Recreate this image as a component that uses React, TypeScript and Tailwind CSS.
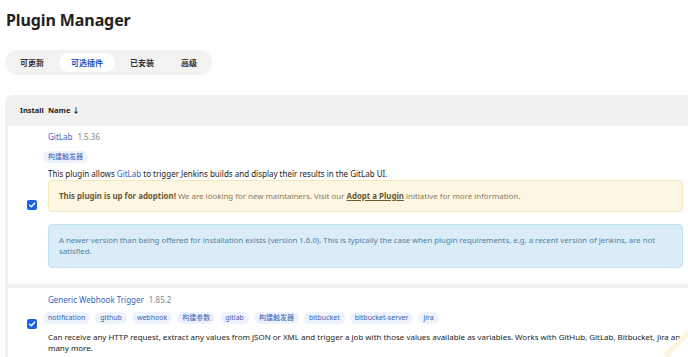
import React from "react";

const FONT = '"Noto Sans", "Noto Sans CJK SC", sans-serif';

function Check() {
  return (
    <span className="flex h-[10px] w-[10px] items-center justify-center rounded-[2px] bg-[#1b63e4]">
      <svg width="8" height="8" viewBox="0 0 10 10">
        <path d="M2 5.2 L4.2 7.3 L8.2 2.8" fill="none" stroke="white" strokeWidth="1.8" strokeLinecap="round" strokeLinejoin="round" />
      </svg>
    </span>
  );
}

function Badge({ children }: { children: React.ReactNode }) {
  return (
    <span className="flex h-[12px] items-center rounded-full bg-[#edf2fc] px-[5px] text-[7px] leading-[12px] text-[#3760b5]">
      {children}
    </span>
  );
}

export default function App() {
  const tags = ["notification", "github", "webhook", "构建参数", "gitlab", "构建触发器", "bitbucket", "bitbucket-server", "jira"];
  return (
    <div className="relative h-[357px] w-[688px] overflow-hidden bg-white text-[#333]" style={{ fontFamily: FONT }}>
      <h1 className="mt-[8px] pl-[6px] text-[16px] font-bold leading-[24px] tracking-[-0.1px] text-[#222]">Plugin Manager</h1>

      <div className="ml-[5px] mt-[18px] flex h-[25px] w-fit items-center gap-[3px] rounded-full bg-[#f2f2f2] px-[3px] text-[8px] font-semibold">
        <span className="flex h-[19px] items-center px-[12px]">可更新</span>
        <span className="flex h-[19px] items-center rounded-full bg-white px-[12px] text-[#2456c4]">可选插件</span>
        <span className="flex h-[19px] items-center px-[12px]">已安装</span>
        <span className="flex h-[19px] items-center px-[12px]">高级</span>
      </div>

      <div className="ml-[5px] mt-[20px] rounded-tl-[8px] bg-[#f1f1f1] pl-[3px]">
        <div className="flex h-[31px] items-center text-[7.5px] font-bold text-[#222]">
          <span className="w-[40px] shrink-0 pl-[12px]">Install</span>
          <span>Name ↓</span>
        </div>

        <div className="flex bg-white">
          <div className="flex w-[40px] shrink-0 items-center pl-[19px]">
            <Check />
          </div>
          <div className="flex min-w-0 flex-1 flex-col pb-[16px] pr-[5px] pt-[5px]">
            <div className="flex items-center gap-[5px] text-[8px] leading-[12px]">
              <span className="text-[#3465c8]">GitLab</span>
              <span className="text-[#888]">1.5.36</span>
            </div>
            <div className="-ml-[5px] mt-[8px] flex">
              <Badge>构建触发器</Badge>
            </div>
            <div className="mt-[4px] text-[8px] leading-[13px] text-[#222]">
              This plugin allows <span className="text-[#3465c8]">GitLab</span> to trigger Jenkins builds and display their results in the GitLab UI.
            </div>
            <div className="rounded-[4px] border border-[#f5e6bb] bg-[#fdf6e3] px-[10px] py-[9px] text-[7.9px] leading-[12px] text-[#8a7a58]">
              <b className="font-bold text-[#6b5932]">This plugin is up for adoption!</b> We are looking for new maintainers. Visit our{" "}
              <b className="font-bold text-[#6b5932] underline">Adopt a Plugin</b> initiative for more information.
            </div>
            <div className="mt-[12px] rounded-[4px] border border-[#c2e1f1] bg-[#d9ecf7] px-[10px] py-[10px] text-[7.8px] leading-[11px] text-[#4f80a3]">
              <span className="whitespace-nowrap">
                A newer version than being offered for installation exists (version 1.6.0). This is typically the case when plugin requirements, e.g. a recent version of Jenkins, are not
              </span>
              <br />
              satisfied.
            </div>
          </div>
        </div>

        <div className="h-[4px]" />

        <div className="flex bg-white pb-[10px] pt-[6px]">
          <div className="flex w-[40px] shrink-0 items-center pl-[19px]">
            <Check />
          </div>
          <div className="flex min-w-0 flex-1 flex-col pr-[5px]">
            <div className="flex items-center gap-[5px] text-[8px] leading-[12px]">
              <span className="text-[#3465c8]">Generic Webhook Trigger</span>
              <span className="text-[#888]">1.85.2</span>
            </div>
            <div className="-ml-[5px] mt-[6px] flex gap-[5px]">
              {tags.map((t) => (
                <Badge key={t}>{t}</Badge>
              ))}
            </div>
            <div className="mt-[8px] text-[7.95px] leading-[11px] text-[#222]">
              <span className="whitespace-nowrap">
                Can receive any HTTP request, extract any values from JSON or XML and trigger a job with those values available as variables. Works with GitHub, GitLab, Bitbucket, Jira and
              </span>
              <br />
              many more.
            </div>
          </div>
        </div>
      </div>

      <svg className="absolute bottom-0 right-0" width="26" height="30" viewBox="0 0 26 30">
        <polyline points="26,6 5,27 8,30" fill="none" stroke="#fff3e0" strokeWidth="5" strokeLinejoin="miter" />
      </svg>
    </div>
  );
}
